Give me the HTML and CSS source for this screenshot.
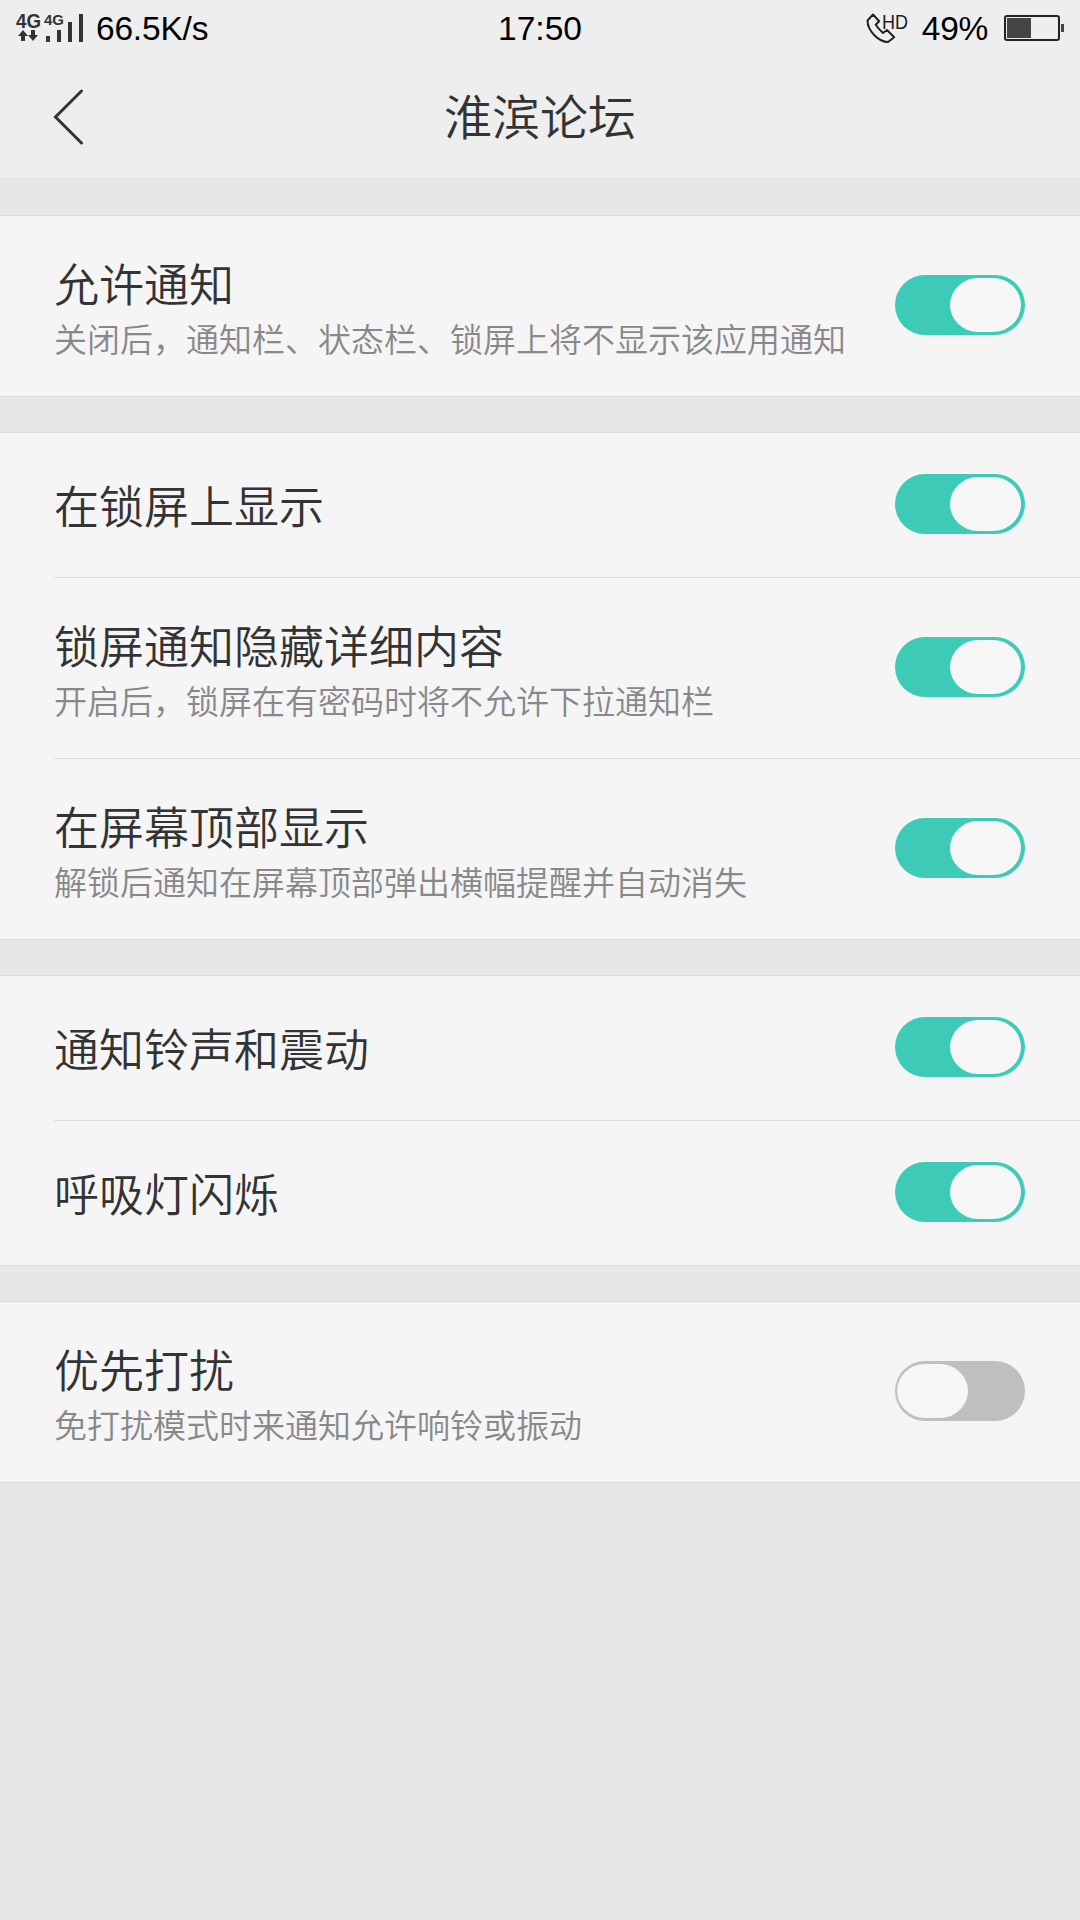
FILE: index.html
```html
<!DOCTYPE html>
<html lang="zh-CN">
<head>
<meta charset="utf-8">
<title>淮滨论坛</title>
<link rel="stylesheet" href="styles.css">
</head>
<body>
<header class="top">
  <div class="status">
    <div class="status-left">
      <svg class="signal" width="70" height="32" viewBox="0 0 70 32">
        <text class="net-main" x="0" y="17" textLength="25" lengthAdjust="spacingAndGlyphs">4G</text>
        <text class="net-sub" x="28" y="14" textLength="20" lengthAdjust="spacingAndGlyphs">4G</text>
        <path d="M7 19l5 6H9v5H5v-5H2zM17 30l-5-6h3v-5h4v5h3z"/>
        <path d="M30 25h4v6h-4zM41 19h4v12h-4zM52 11h4v20h-4zM63 3h4v28h-4z"/>
      </svg>
      <span class="speed">66.5K/s</span>
    </div>
    <span class="clock">17:50</span>
    <div class="status-right">
      <svg class="call" width="43" height="32" viewBox="0 0 43 32">
        <path d="M1.5 7.5L7 1.5L13.2 8.2L9.7 11.8C11.8 15 14.2 17.5 17 20L21 17L28.2 24.2L22 29C13 29 1.5 18 1.5 7.5Z"/>
        <text x="16" y="15.500" textLength="26" lengthAdjust="spacingAndGlyphs">HD</text>
      </svg>
      <span class="percent">49%</span>
      <svg class="battery" width="60" height="28" viewBox="0 0 60 28">
        <rect x="1" y="2" width="54" height="24" rx="2"/>
        <path d="M3 4h24v20H3zM57 10h3v8h-3z"/>
      </svg>
    </div>
  </div>
  <div class="nav">
    <svg class="back" width="32" height="56" viewBox="0 0 32 56"><path d="M28.500 2L2.500 28L28.500 54"/></svg>
    <h1 class="nav-title">淮滨论坛</h1>
  </div>
</header>
<main class="groups">
  <section class="group">
    <div class="row tall">
      <div class="label"><div class="title">允许通知</div><div class="hint">关闭后，通知栏、状态栏、锁屏上将不显示该应用通知</div></div>
      <div class="switch on"><div class="thumb"></div></div>
    </div>
  </section>
  <section class="group">
    <div class="row">
      <div class="label"><div class="title">在锁屏上显示</div></div>
      <div class="switch on"><div class="thumb"></div></div>
    </div>
    <div class="row tall">
      <div class="label"><div class="title">锁屏通知隐藏详细内容</div><div class="hint">开启后，锁屏在有密码时将不允许下拉通知栏</div></div>
      <div class="switch on"><div class="thumb"></div></div>
    </div>
    <div class="row tall">
      <div class="label"><div class="title">在屏幕顶部显示</div><div class="hint">解锁后通知在屏幕顶部弹出横幅提醒并自动消失</div></div>
      <div class="switch on"><div class="thumb"></div></div>
    </div>
  </section>
  <section class="group">
    <div class="row">
      <div class="label"><div class="title">通知铃声和震动</div></div>
      <div class="switch on"><div class="thumb"></div></div>
    </div>
    <div class="row">
      <div class="label"><div class="title">呼吸灯闪烁</div></div>
      <div class="switch on"><div class="thumb"></div></div>
    </div>
  </section>
  <section class="group">
    <div class="row tall">
      <div class="label"><div class="title">优先打扰</div><div class="hint">免打扰模式时来通知允许响铃或振动</div></div>
      <div class="switch"><div class="thumb"></div></div>
    </div>
  </section>
</main>
</body>
</html>
```
FILE: styles.css
```css
* { box-sizing: border-box; }
body {
  margin: 0;
  min-height: 1920px;
  background: #e7e7e7;
  color: #333;
  font-family: "Noto Sans CJK SC", sans-serif;
  font-weight: 350;
}
.top { height: 180px; background: #eee; border-bottom: 2px solid #e1e1e1; }
.status {
  display: grid;
  grid-template-columns: 1fr auto 1fr;
  align-items: center;
  height: 56px;
  padding: 0 16px;
  color: #000;
  font: 400 33.5px/56px "Liberation Sans", sans-serif;
}
.status-left, .status-right { display: flex; align-items: center; }
.status-right { justify-content: flex-end; }
.speed, .clock, .percent { padding-top: 1px; }
.speed { letter-spacing: -0.2px; }
.percent { letter-spacing: -0.3px; }
.signal { fill: #333; margin: 0 10px 4px 0; }
.net-main { font: 700 19.5px "Liberation Sans", sans-serif; }
.net-sub { font: 700 15.5px "Liberation Sans", sans-serif; }
.call { margin-right: 13px; overflow: visible; }
.call path { fill: none; stroke: #222; stroke-width: 2; stroke-linejoin: round; }
.call text { fill: #222; font: 400 20px "Liberation Sans", sans-serif; }
.percent { margin-right: 16px; }
.battery { margin-bottom: 2px; }
.battery rect { fill: none; stroke: #222; stroke-width: 2; }
.battery path { fill: #444; }
.nav {
  display: grid;
  grid-template-columns: 1fr auto 1fr;
  align-items: center;
  height: 122px;
  padding: 0 53px;
}
.back { fill: none; stroke: #333; stroke-width: 3; stroke-linecap: round; }
.nav-title { margin: 0; padding-bottom: 6px; font-size: 48px; font-weight: 350; line-height: 116px; }
.groups { display: flex; flex-direction: column; gap: 37px; padding-top: 36px; }
.group { background: #f5f5f5; box-shadow: 0 -1px #dcdcdc, 0 1px #dcdcdc; padding-left: 54px; }
.row {
  display: flex;
  align-items: center;
  justify-content: space-between;
  height: 144px;
  padding-right: 55px;
}
.row.tall { height: 180px; }
.row + .row { border-top: 1px solid #dcdcdc; height: 145px; }
.row + .row.tall { height: 181px; }
.title { font-size: 45px; line-height: 60px; padding: 1px 0 2px; white-space: nowrap; }
.tall .title { padding: 2px 0 1px; }
.hint { font-size: 33px; line-height: 48px; color: #888; white-space: nowrap; }
.switch {
  display: flex;
  width: 130px;
  height: 60px;
  margin-bottom: 2px;
  padding: 3px 4px 3px 2px;
  border-radius: 30px;
  background: #bfbfbf;
}
.switch.on { justify-content: flex-end; background: #3dcbb8; }
.thumb { width: 71px; height: 54px; border-radius: 28px / 27px; background: #f6f6f6; }
```
